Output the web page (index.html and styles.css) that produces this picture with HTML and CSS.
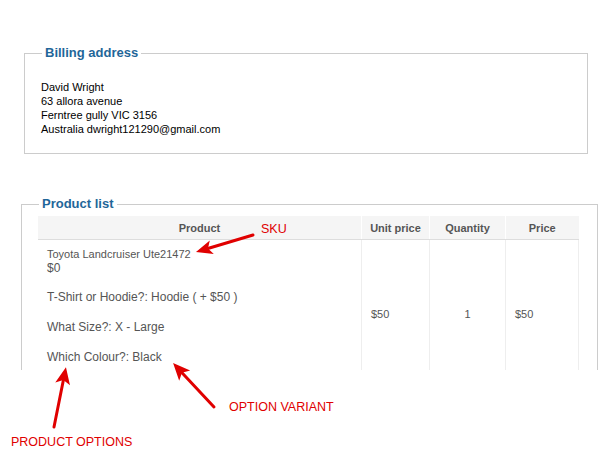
FILE: index.html
```html
<!DOCTYPE html>
<html>
<head>
    <title>Order details</title>
    <link rel="stylesheet" href="styles.css">
</head>
<body>
    <div class="page">
        <div class="shot">
            <fieldset class="box billing">
                <legend>Billing address</legend>
                <div class="address">
                    <div>David Wright</div>
                    <div>63 allora avenue</div>
                    <div>Ferntree gully VIC 3156</div>
                    <div>Australia dwright121290@gmail.com</div>
                </div>
            </fieldset>

            <fieldset class="box products">
                <legend>Product list</legend>
                <table class="product-table">
                    <thead>
                        <tr>
                            <th class="col-product">Product</th>
                            <th class="col-unit">Unit price</th>
                            <th class="col-qty">Quantity</th>
                            <th class="col-price">Price</th>
                        </tr>
                    </thead>
                    <tbody>
                        <tr>
                            <td class="product-cell">
                                <div class="item-name">Toyota Landcruiser Ute21472</div>
                                <div class="item-cost">$0</div>
                                <div class="item-option">T-Shirt or Hoodie?: Hoodie ( + $50 )</div>
                                <div class="item-option">What Size?: X - Large</div>
                                <div class="item-option">Which Colour?: Black</div>
                            </td>
                            <td>$50</td>
                            <td class="center">1</td>
                            <td>$50</td>
                        </tr>
                    </tbody>
                </table>
            </fieldset>
        </div>

        <!-- annotations drawn over the screenshot -->
        <svg class="notes" width="608" height="469" viewBox="0 0 608 469">
            <g class="arrow" transform="translate(253 235) rotate(163.4)">
                <line x1="0" y1="0" x2="48" y2="0"></line>
                <polygon points="59.5,0 43,-7 47,0 43,7"></polygon>
            </g>
            <g class="arrow" transform="translate(214 407) rotate(-133)">
                <line x1="0" y1="0" x2="49" y2="0"></line>
                <polygon points="60,0 43,-7.5 47,0 43,7.5"></polygon>
            </g>
            <g class="arrow" transform="translate(54 427) rotate(-78.7)">
                <line x1="0" y1="0" x2="50" y2="0"></line>
                <polygon points="61,0 44,-7.5 48,0 44,7.5"></polygon>
            </g>
            <text x="261" y="233">SKU</text>
            <text x="229" y="411">OPTION VARIANT</text>
            <text x="11" y="446">PRODUCT OPTIONS</text>
        </svg>
    </div>
</body>
</html>
```

FILE: styles.css
```css
body {
    margin: 0;
    padding: 0;
    background: #ffffff;
    font-family: "Liberation Sans", Arial, sans-serif;
}

.page {
    position: relative;
    width: 608px;
    height: 469px;
    overflow: hidden;
}

.shot {
    height: 370px;
    overflow: hidden;
    padding-top: 45px;
    box-sizing: border-box;
}

.box {
    border: 1px solid #cccccc;
    padding: 0 16px;
    margin: 0;
    box-sizing: border-box;
}

.box legend {
    font-size: 13px;
    font-weight: bold;
    color: #1f6699;
    padding: 0 3px;
    margin-left: 1px;
    line-height: 16px;
}

.billing {
    width: 564px;
    margin-left: 24px;
    padding-top: 19px;
    padding-bottom: 17px;
}

.address {
    font-size: 11px;
    line-height: 14px;
    color: #000000;
}

.products {
    width: 577px;
    margin-left: 21px;
    margin-top: 42px;
    padding-top: 4px;
}

.product-table {
    width: 541px;
    table-layout: fixed;
    border-collapse: collapse;
    font-size: 11px;
    color: #555555;
}

.product-table th {
    background: #f5f5f5;
    font-weight: bold;
    color: #555555;
    height: 23px;
    padding: 0;
    text-align: center;
    border-bottom: 1px solid #dddddd;
    border-left: 1px solid #ffffff;
}

.product-table .col-product { width: 323px; border-left: none; }
.product-table .col-unit { width: 67px; }
.product-table .col-qty { width: 75px; }

.product-table td {
    vertical-align: middle;
    padding: 0 9px;
    border-left: 1px solid #eeeeee;
    border-right: 1px solid #eeeeee;
}

.product-table td.product-cell {
    padding: 7px 9px 22px;
    border-left: none;
}

.product-table .center {
    text-align: center;
}

.item-name {
    line-height: 14px;
}

.item-cost {
    font-size: 12px;
    line-height: 14px;
}

.item-option {
    font-size: 12px;
    line-height: 15px;
    margin-top: 15px;
}

.notes {
    position: absolute;
    left: 0;
    top: 0;
}

.notes .arrow line {
    stroke: #e00000;
    stroke-width: 3;
    stroke-linecap: round;
}

.notes .arrow polygon {
    fill: #e00000;
}

.notes text {
    fill: #e00000;
    font-family: "Liberation Sans", Arial, sans-serif;
    font-size: 12.5px;
}
```
